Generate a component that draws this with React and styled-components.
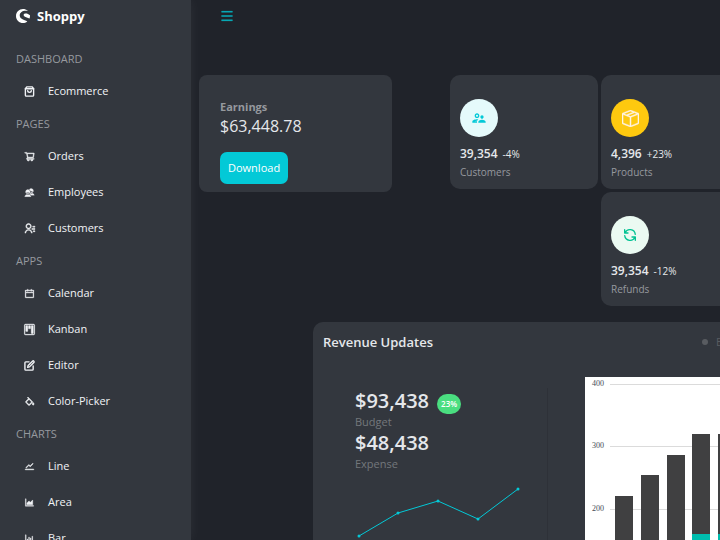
import React from 'react';
import styled, { createGlobalStyle } from 'styled-components';
import { SiShopware } from 'react-icons/si';
import { FiShoppingBag, FiEdit } from 'react-icons/fi';
import {
  AiOutlineShoppingCart,
  AiOutlineCalendar,
  AiOutlineStock,
  AiOutlineAreaChart,
  AiOutlineBarChart,
  AiOutlineMenu,
} from 'react-icons/ai';
import { IoMdContacts } from 'react-icons/io';
import { RiContactsLine } from 'react-icons/ri';
import { BsKanban, BsBoxSeam } from 'react-icons/bs';
import { BiColorFill } from 'react-icons/bi';
import { MdOutlineSupervisorAccount } from 'react-icons/md';
import { HiOutlineRefresh } from 'react-icons/hi';

const GlobalStyle = createGlobalStyle`
  * {
    box-sizing: border-box;
  }
  body {
    margin: 0;
    background: #20232a;
    color: #e5e7eb;
    font-family: "Open Sans", "Noto Sans", sans-serif;
    font-size: 11px;
    line-height: 16px;
  }
  h2, h3, p {
    margin: 0;
  }
`;

const Layout = styled.div`
  display: flex;
  height: 100vh;
  overflow: hidden;
`;

const Sidebar = styled.nav`
  flex: none;
  width: 191px;
  padding: 8px 16px 0;
  overflow: hidden;
  background: #33373e;
  box-shadow: 0 0 12px rgba(255, 255, 255, 0.06);
`;

const Logo = styled.a`
  display: flex;
  align-items: center;
  gap: 7px;
  margin-bottom: 27px;
  color: #fff;
  font-size: 13px;
  font-weight: 700;
  text-decoration: none;
`;

const Group = styled.section`
  margin-bottom: 7px;
`;

const GroupTitle = styled.h3`
  margin-bottom: 6px;
  color: #96999e;
  font-size: 11px;
  font-weight: 400;
  text-transform: uppercase;
`;

const NavLink = styled.a`
  display: flex;
  align-items: center;
  gap: 13px;
  height: 36px;
  padding-left: 8px;
  color: #f1f3f6;
  font-weight: 500;
  text-decoration: none;

  svg {
    width: 11px;
    height: 11px;
    overflow: visible;
  }
`;

const Main = styled.main`
  flex: 1;
  min-width: 0;
  overflow: hidden;
`;

const Topbar = styled.header`
  display: flex;
  height: 75px;
  padding: 9px 29px;
`;

const MenuButton = styled.button`
  display: flex;
  align-items: flex-start;
  height: 16px;
  padding: 0;
  border: 0;
  background: none;
  color: #03c9d7;
`;

const Card = styled.section`
  border-radius: 10px;
  background: #33373e;
`;

const Summary = styled.div`
  display: flex;
  align-items: flex-start;
  gap: 58px;
  padding-left: 8px;
`;

const EarningsCard = styled(Card)`
  flex: none;
  width: 193px;
  padding: 24px 21px 8px;
  border-radius: 8px;
`;

const EarningsLabel = styled.p`
  color: #96999e;
  font-weight: 700;
`;

const EarningsValue = styled.p`
  font-size: 16px;
  line-height: 22px;
`;

const DownloadButton = styled.button`
  display: block;
  height: 32px;
  margin-top: 15px;
  padding: 0 8px;
  border: 0;
  border-radius: 7px;
  background: #03c9d7;
  color: #fff;
  font: 500 11px/16px "Open Sans", "Noto Sans", sans-serif;
`;

const Stats = styled.div`
  display: grid;
  flex: none;
  grid-template-columns: repeat(2, 148px);
  gap: 3px;
`;

const StatCard = styled(Card)`
  grid-column: ${({ $column }) => $column};
  padding: 24px 10px 9px;
`;

const StatIcon = styled.div`
  display: flex;
  align-items: center;
  justify-content: center;
  width: 38px;
  height: 38px;
  margin-bottom: 9px;
  border-radius: 50%;
  background: ${({ $background }) => $background};
  color: ${({ $color }) => $color};
`;

const StatLine = styled.p`
  display: flex;
  align-items: baseline;
  gap: 5px;
  font-size: 10px;
  font-weight: 500;

  strong {
    font-size: 12px;
    font-weight: 600;
  }
`;

const StatTitle = styled.p`
  margin-top: 2px;
  color: #96999e;
  font-size: 10px;
`;

const RevenueCard = styled(Card)`
  width: 520px;
  margin: 16px 0 0 122px;
  padding: 10px 10px 0;
`;

const RevenueHeader = styled.div`
  display: flex;
  justify-content: space-between;
  align-items: center;
  height: 20px;
`;

const RevenueTitle = styled.h2`
  font-size: 13px;
  font-weight: 600;
`;

const Legend = styled.div`
  display: flex;
  gap: 16px;
  width: 121px;
`;

const LegendItem = styled.span`
  display: flex;
  align-items: center;
  gap: 8px;
  color: ${({ $color }) => $color};

  &::before {
    content: "";
    width: 6px;
    height: 6px;
    border-radius: 50%;
    background: currentColor;
  }
`;

const RevenueBody = styled.div`
  display: flex;
  align-items: flex-start;
  margin-top: 25px;
  padding-left: 32px;
`;

const Figures = styled.div`
  flex: none;
  width: 193px;
  margin-top: 11px;
  border-right: 1px solid #2e3138;
`;

const Amount = styled.p`
  display: flex;
  align-items: center;
  gap: 8px;
  font-size: 20px;
  font-weight: 600;
  line-height: 26px;
`;

const Badge = styled.span`
  margin-top: 6px;
  padding: 0 4px;
  border-radius: 10px;
  background: #4ade80;
  color: #fff;
  font-size: 8px;
  font-weight: 600;
  line-height: 20px;
`;

const Caption = styled.p`
  color: #74777c;
`;

const Sparkline = styled.svg`
  display: block;
  margin-top: 10px;
`;

const Chart = styled.svg`
  flex: none;
  margin-left: 37px;
  background: #fff;
  font-family: "Liberation Serif", serif;
  font-size: 8px;
`;

// third value is the stroke width, in the units of the icon's own viewBox
const links = [
  { title: 'Dashboard', items: [['Ecommerce', FiShoppingBag, 3]] },
  {
    title: 'Pages',
    items: [
      ['Orders', AiOutlineShoppingCart, 40],
      ['Employees', IoMdContacts, 10],
      ['Customers', RiContactsLine, 1],
    ],
  },
  {
    title: 'Apps',
    items: [
      ['Calendar', AiOutlineCalendar, 30],
      ['Kanban', BsKanban, 0.5],
      ['Editor', FiEdit, 3],
      ['Color-Picker', BiColorFill, 1],
    ],
  },
  {
    title: 'Charts',
    items: [
      ['Line', AiOutlineStock, 40],
      ['Area', AiOutlineAreaChart, 30],
      ['Bar', AiOutlineBarChart, 30],
    ],
  },
];

const stats = [
  { title: 'Customers', amount: '39,354', change: '-4%', icon: <MdOutlineSupervisorAccount size={16} />, color: '#03c9d7', background: '#e5fafb', column: 1 },
  { title: 'Products', amount: '4,396', change: '+23%', icon: <BsBoxSeam size={17} strokeWidth="0.4" />, color: '#fff4e5', background: '#fec90f', column: 2 },
  { title: 'Refunds', amount: '39,354', change: '-12%', icon: <HiOutlineRefresh size={16} />, color: '#00c292', background: '#ebfaf2', column: 2 },
];

const sparkPoints = [[4, 54], [43, 31], [83, 19], [123, 37], [163, 7]];

const bars = [
  { x: 30, top: 119 },
  { x: 56, top: 98 },
  { x: 82, top: 78 },
  { x: 107, top: 57, teal: 157 },
  { x: 133, top: 57, teal: 157 },
];

const ticks = [[400, 7], [300, 69], [200, 132]];

const App = () => (
  <>
    <GlobalStyle />
    <Layout>
      <Sidebar>
        <Logo href="#">
          <SiShopware size={14} />
          <span>Shoppy</span>
        </Logo>
        {links.map(({ title, items }) => (
          <Group key={title}>
            <GroupTitle>{title}</GroupTitle>
            {items.map(([name, Icon, stroke]) => (
              <NavLink href="#" key={name}>
                <Icon strokeWidth={stroke} />
                <span>{name}</span>
              </NavLink>
            ))}
          </Group>
        ))}
      </Sidebar>
      <Main>
        <Topbar>
          <MenuButton type="button" aria-label="Menu">
            <AiOutlineMenu size={14} strokeWidth="20" />
          </MenuButton>
        </Topbar>
        <Summary>
          <EarningsCard>
            <EarningsLabel>Earnings</EarningsLabel>
            <EarningsValue>$63,448.78</EarningsValue>
            <DownloadButton type="button">Download</DownloadButton>
          </EarningsCard>
          <Stats>
            {stats.map((item) => (
              <StatCard key={item.title} $column={item.column}>
                <StatIcon $color={item.color} $background={item.background}>{item.icon}</StatIcon>
                <StatLine>
                  <strong>{item.amount}</strong>
                  <span>{item.change}</span>
                </StatLine>
                <StatTitle>{item.title}</StatTitle>
              </StatCard>
            ))}
          </Stats>
        </Summary>
        <RevenueCard>
          <RevenueHeader>
            <RevenueTitle>Revenue Updates</RevenueTitle>
            <Legend>
              <LegendItem $color="#595c61">Expense</LegendItem>
            </Legend>
          </RevenueHeader>
          <RevenueBody>
            <Figures>
              <Amount>
                $93,438
                <Badge>23%</Badge>
              </Amount>
              <Caption>Budget</Caption>
              <Amount>$48,438</Amount>
              <Caption>Expense</Caption>
              <Sparkline width="168" height="60">
                <polyline points={sparkPoints.join(' ')} fill="none" stroke="#03c9d7" strokeWidth="1" />
                {sparkPoints.map(([x, y]) => (
                  <circle key={x} cx={x} cy={y} r="1.5" fill="#03c9d7" />
                ))}
              </Sparkline>
            </Figures>
            <Chart width="300" height="240">
              {ticks.map(([value, y]) => (
                <g key={value}>
                  <text x="7" y={y + 2} fill="#444a55">{value}</text>
                  <line x1="25" x2="300" y1={y + 0.5} y2={y + 0.5} stroke="#dbdbdb" />
                </g>
              ))}
              {bars.map(({ x, top, teal }) => (
                <g key={x}>
                  <rect x={x} y={top} width="18" height={240 - top} fill="#404041" />
                  {teal && <rect x={x} y={teal} width="18" height={240 - teal} fill="#00bdae" />}
                </g>
              ))}
            </Chart>
          </RevenueBody>
        </RevenueCard>
      </Main>
    </Layout>
  </>
);

export default App;
